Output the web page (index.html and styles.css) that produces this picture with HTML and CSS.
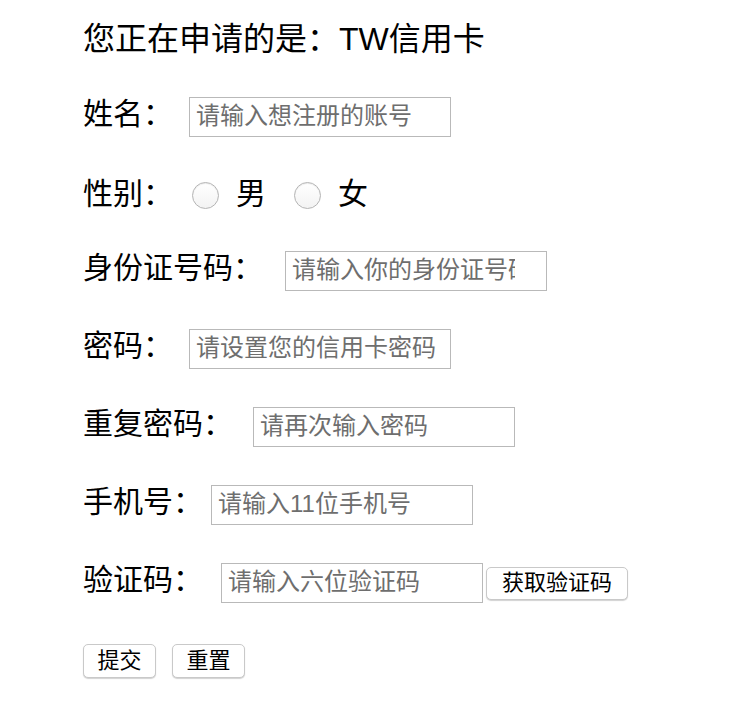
FILE: index.html
```html
<!DOCTYPE html>
<html lang="zh-CN">
<head>
<meta charset="utf-8">
<title>TW信用卡申请</title>
<link rel="stylesheet" href="styles.css">
</head>
<body>
<form class="page">
  <div class="title">您正在申请的是：TW信用卡</div>
  <div class="row">
    <label class="lbl lbl-name">姓名：</label>
    <input class="field" type="text" placeholder="请输入想注册的账号">
  </div>
  <div class="row row-gender">
    <span class="lbl lbl-gender">性别：</span>
    <label class="opt"><input class="radio" type="radio" name="sex"><span class="opt-text">男</span></label>
    <label class="opt opt-second"><input class="radio" type="radio" name="sex"><span class="opt-text">女</span></label>
  </div>
  <div class="row">
    <label class="lbl lbl-id">身份证号码：</label>
    <input class="field field-id" type="text" placeholder="请输入你的身份证号码">
  </div>
  <div class="row">
    <label class="lbl lbl-pwd">密码：</label>
    <input class="field" type="text" placeholder="请设置您的信用卡密码">
  </div>
  <div class="row">
    <label class="lbl lbl-repeat">重复密码：</label>
    <input class="field" type="text" placeholder="请再次输入密码">
  </div>
  <div class="row">
    <label class="lbl lbl-phone">手机号：</label>
    <input class="field" type="text" placeholder="请输入11位手机号">
  </div>
  <div class="row">
    <label class="lbl lbl-code">验证码：</label>
    <input class="field" type="text" placeholder="请输入六位验证码">
    <button class="btn btn-code" type="button">获取验证码</button>
  </div>
  <div class="row row-actions">
    <button class="btn" type="submit">提交</button>
    <button class="btn btn-reset" type="reset">重置</button>
  </div>
</form>
</body>
</html>
```

FILE: styles.css
```css
html, body {
  margin: 0;
  padding: 0;
  background: #ffffff;
}

body {
  font-family: "Liberation Sans", "Noto Sans CJK SC", sans-serif;
  color: #000000;
}

.page {
  display: flex;
  flex-direction: column;
  gap: 38px;
  padding: 19px 0 0 83px;
  margin: 0;
}

.title {
  height: 40px;
  line-height: 40px;
  font-size: 32px;
  white-space: nowrap;
}

.row {
  display: flex;
  align-items: baseline;
  height: 40px;
}

.lbl {
  font-size: 30px;
  line-height: 1;
  white-space: nowrap;
  flex: none;
}

.lbl-name,
.lbl-pwd { width: 106px; }
.lbl-id { width: 202px; }
.lbl-repeat { width: 170px; }
.lbl-phone { width: 128px; }
.lbl-code { width: 138px; }
.lbl-gender { width: 109px; }

.field {
  box-sizing: border-box;
  width: 262px;
  height: 40px;
  margin: 0;
  padding: 0 5px 2px 6px;
  border: 1px solid #b9b9b9;
  border-radius: 0;
  background: #ffffff;
  font-family: "Liberation Sans", "Noto Sans CJK SC", sans-serif;
  font-size: 24px;
  color: #000000;
  outline: none;
  flex: none;
}

.field::placeholder {
  color: #6e6e6e;
  opacity: 1;
}

.field-id {
  padding-right: 31px;
}

.row-gender {
  align-items: center;
  height: 38px;
}

.opt {
  display: flex;
  align-items: center;
}

.opt-second {
  margin-left: 28px;
}

.radio {
  appearance: none;
  -webkit-appearance: none;
  box-sizing: border-box;
  width: 27px;
  height: 27px;
  margin: 3px 17px 0 0;
  border: 1px solid #b4b4b4;
  border-radius: 50%;
  background: linear-gradient(#ffffff, #f3f3f3);
  box-shadow: inset 0 1px 1px rgba(0, 0, 0, 0.08);
  flex: none;
}

.opt-text {
  font-size: 30px;
  line-height: 30px;
}

.btn {
  box-sizing: border-box;
  height: 34px;
  margin: 0;
  padding: 0 13px;
  border: 1px solid #c9c9c9;
  border-radius: 5px;
  background: #ffffff;
  box-shadow: 0 1px 1px rgba(0, 0, 0, 0.18);
  font-family: "Liberation Sans", "Noto Sans CJK SC", sans-serif;
  font-size: 22px;
  line-height: 1;
  color: #000000;
  flex: none;
}

.btn-code {
  width: 142px;
  height: 33px;
  margin-left: 3px;
}

.row-actions {
  align-items: center;
}

.row-actions .btn {
  width: 73px;
}

.btn-reset {
  margin-left: 16px;
}
```
